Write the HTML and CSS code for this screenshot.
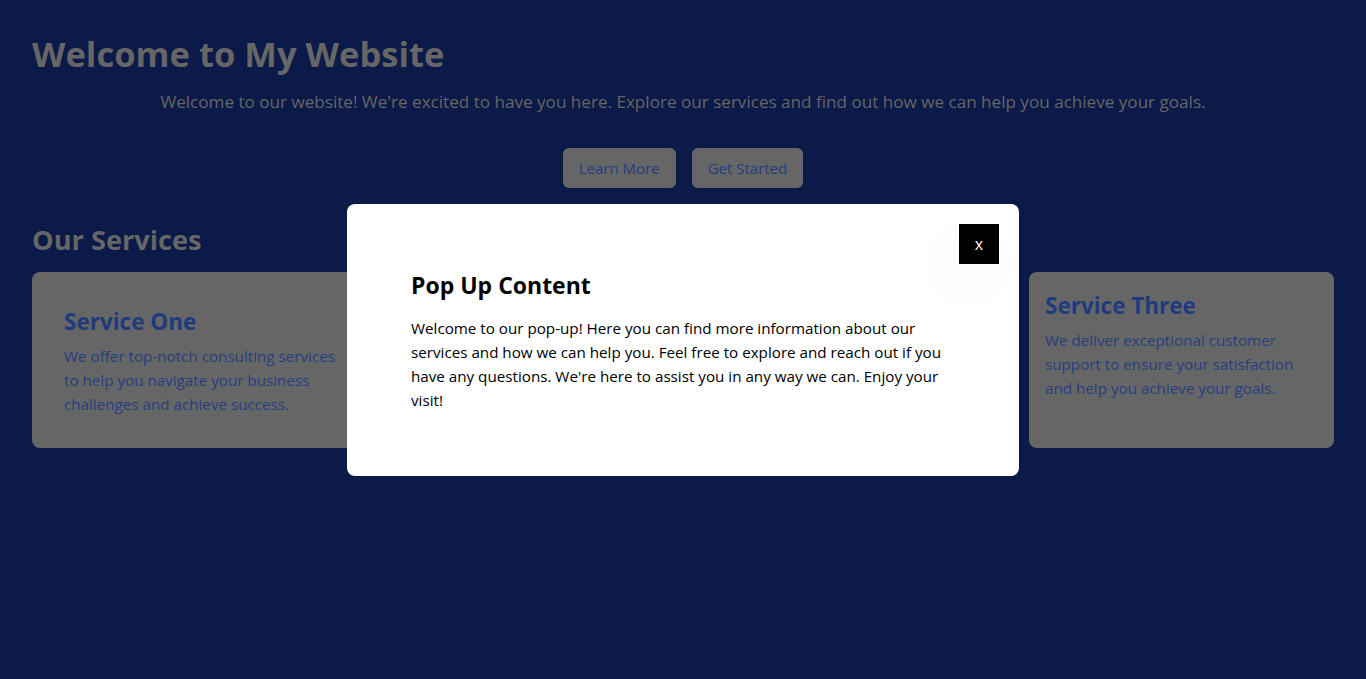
FILE: index.html
```html
<!DOCTYPE html>
<html lang="en">
<head>
<meta charset="utf-8">
<title>Welcome to My Website</title>
<link rel="stylesheet" href="styles.css">
</head>
<body>
<div class="page">
  <h1 class="title">Welcome to My Website</h1>
  <p class="intro">Welcome to our website! We're excited to have you here. Explore our services and find out how we can help you achieve your goals.</p>
  <div class="actions">
    <button class="btn">Learn More</button>
    <button class="btn">Get Started</button>
  </div>
  <h2 class="section-title">Our Services</h2>
  <div class="services">
    <div class="card card-one">
      <h3 class="card-title">Service One</h3>
      <p class="card-text">We offer top-notch consulting services to help you navigate your business challenges and achieve success.</p>
    </div>
    <div class="card card-two"></div>
    <div class="card card-three">
      <h3 class="card-title">Service Three</h3>
      <p class="card-text">We deliver exceptional customer support to ensure your satisfaction and help you achieve your goals.</p>
    </div>
  </div>
</div>
<div class="overlay">
  <div class="modal">
    <button class="close">x</button>
    <h2 class="modal-title">Pop Up Content</h2>
    <p class="modal-text">Welcome to our pop-up! Here you can find more information about our services and how we can help you. Feel free to explore and reach out if you have any questions. We're here to assist you in any way we can. Enjoy your visit!</p>
  </div>
</div>
</body>
</html>
```

FILE: styles.css
```css
html, body {
  margin: 0;
  height: 100%;
}
body {
  background: #0b1a48;
  font-family: "Open Sans", "Noto Sans", sans-serif;
  color: #666666;
}
.page {
  padding: 32px;
}
.title {
  margin: 0;
  font-size: 34.6px;
  line-height: 44px;
  font-weight: 700;
  color: #666666;
}
.intro {
  margin: 12px 0 0;
  font-size: 17.1px;
  line-height: 28px;
  text-align: center;
  color: #666666;
}
.actions {
  margin-top: 32px;
  display: flex;
  justify-content: center;
  gap: 16px;
}
.btn {
  height: 40px;
  padding: 0 16px;
  border: none;
  border-radius: 6px;
  background: #666666;
  color: #243f80;
  font-family: inherit;
  font-size: 15px;
}
.section-title {
  margin: 34px 0 0;
  font-size: 27.2px;
  line-height: 36px;
  font-weight: 700;
  color: #666666;
}
.services {
  margin-top: 14px;
  display: grid;
  grid-template-columns: 352px 1fr 305px;
  gap: 24px;
}
.card {
  background: #666666;
  border-radius: 8px;
  height: 176px;
  box-sizing: border-box;
}
.card-one { padding: 32px; }
.card-three { padding: 16px; }
.card-title {
  margin: 0;
  font-size: 22.5px;
  line-height: 36px;
  font-weight: 700;
  color: #1f3b7e;
}
.card-text {
  margin: 4px 0 0;
  font-size: 15.2px;
  line-height: 24px;
  color: #263f80;
}
.overlay {
  position: fixed;
  inset: 0;
  display: flex;
  align-items: center;
  justify-content: center;
}
.modal {
  position: relative;
  width: 672px;
  box-sizing: border-box;
  padding: 64px;
  background: #ffffff;
  border-radius: 8px;
  color: #000000;
}
.close {
  position: absolute;
  top: 20px;
  right: 20px;
  width: 40px;
  height: 40px;
  border: none;
  background: #000000;
  color: #ffffff;
  font-family: "Open Sans", sans-serif;
  font-size: 16px;
  box-shadow: -10px 20px 50px rgba(0,0,0,0.04);
}
.modal-title {
  margin: 0;
  font-size: 23px;
  line-height: 34px;
  font-weight: 700;
}
.modal-text {
  margin: 14px 0 0;
  font-size: 15.2px;
  line-height: 24px;
}
```
